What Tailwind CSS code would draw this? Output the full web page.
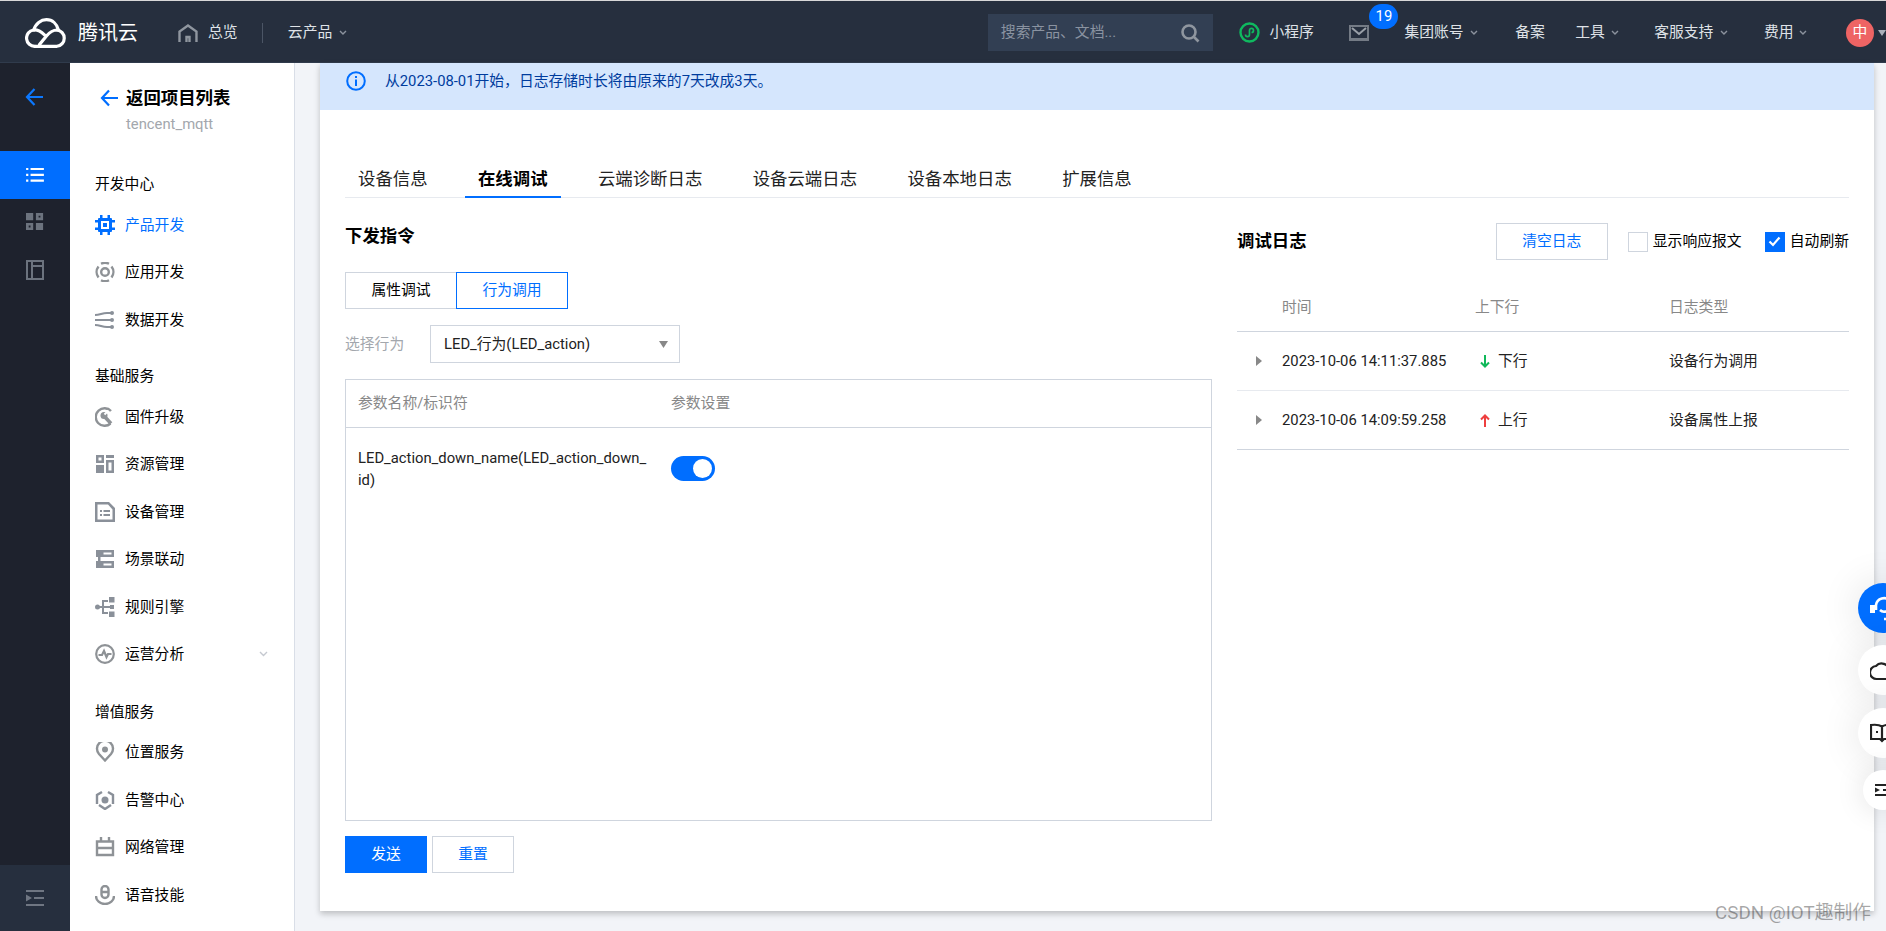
<!DOCTYPE html>
<html lang="zh">
<head>
  <meta charset="UTF-8" />
  <title>在线调试</title>
  <script src="https://cdn.jsdelivr.net/npm/@tailwindcss/browser@4"></script>
</head>
<body class="relative w-[1886px] h-[931px] overflow-hidden bg-[#f2f4f8] text-[14.8px] text-black font-[Roboto,'Noto_Sans_CJK_SC',sans-serif]">
  <div class="h-px bg-[#d8d8d8]"></div>

  <!-- top bar -->
  <header class="flex items-center h-[62px] pt-[2px] bg-[#262f3e] text-[#dfe2e7] border-b border-[#303b4c]">
    <svg class="ml-[25px] w-[42px] h-[30px]" viewBox="0 0 42 30" fill="none" stroke="#fff" stroke-width="3.2" stroke-linecap="round">
      <path d="M10 28.300H32A8.200 8.200 0 0 0 32 12C27 12 24.500 14.500 21.500 18L14.500 26.500"/>
      <path d="M10 28.300A8.200 8.200 0 0 1 8.500 12C13 11.500 16.500 14 19.500 16.800"/>
      <path d="M8.800 12C10.500 5.500 16 1.700 21.500 1.700C27.500 1.700 32 6 33.500 12"/>
    </svg>
    <span class="ml-[11px] w-[60px] text-[20px] text-white whitespace-nowrap">腾讯云</span>
    <svg class="ml-[40px] w-[20px] h-[18px]" viewBox="0 0 20 18" fill="none" stroke="#8f969f" stroke-width="2.400"><path d="M1.500 18V7.500L10 1.500l8.500 6V18M8.500 18v-5h3v5"/></svg>
    <span class="ml-[10px] w-[30px] whitespace-nowrap">总览</span>
    <span class="ml-[24px] w-px h-[20px] bg-[#4b5565]"></span>
    <span class="ml-[25px] w-[44px] whitespace-nowrap">云产品</span>
    <svg class="ml-[7px] w-[8px] h-[6px]" viewBox="0 0 8 6" fill="none" stroke="#8b929d" stroke-width="1.400"><path d="M1 1l3 3 3-3"/></svg>

    <div class="ml-[641px] flex items-center justify-between w-[225px] h-[37px] px-[13px] bg-[#323f53] text-[#8a93a1]">
      <span class="whitespace-nowrap">搜索产品、文档...</span>
      <svg class="w-[20px] h-[20px]" viewBox="0 0 20 20" fill="none" stroke="#8f969f" stroke-width="2.600"><circle cx="9" cy="9" r="6.500"/><path d="M14 14l4.500 4.500"/></svg>
    </div>
    <svg class="ml-[26px] w-[21px] h-[21px]" viewBox="0 0 21 21" fill="none"><circle cx="10.500" cy="10.500" r="9" stroke="#0fb95f" stroke-width="2.400"/><path d="M6.500 12.500c0 2.800 4 2.800 4 0V8.500c0-2.800 4-2.800 4 0 0 1.300-1 2-2 2" stroke="#0fb95f" stroke-width="1.700"/></svg>
    <span class="ml-[10px] w-[46px] whitespace-nowrap">小程序</span>
    <div class="relative ml-[34px] w-[20px] h-[16px] bg-[#262f3e] border-2 border-b-[3px] border-[#747b85]">
      <svg class="absolute left-0 top-0 w-[16px] h-[11px]" viewBox="0 0 16 11" fill="none" stroke="#9aa0a8" stroke-width="2"><path d="M1 1l7 6 7-6"/></svg>
      <span class="absolute left-[18px] top-[-23px] flex items-center justify-center w-[29px] h-[25px] rounded-full bg-[#006eff] text-white">19</span>
    </div>
    <span class="ml-[35px] w-[60px] whitespace-nowrap">集团账号</span>
    <svg class="ml-[6px] w-[8px] h-[6px]" viewBox="0 0 8 6" fill="none" stroke="#8b929d" stroke-width="1.400"><path d="M1 1l3 3 3-3"/></svg>
    <span class="ml-[37px] w-[30px] whitespace-nowrap">备案</span>
    <span class="ml-[30px] w-[30px] whitespace-nowrap">工具</span>
    <svg class="ml-[6px] w-[8px] h-[6px]" viewBox="0 0 8 6" fill="none" stroke="#8b929d" stroke-width="1.400"><path d="M1 1l3 3 3-3"/></svg>
    <span class="ml-[35px] w-[60px] whitespace-nowrap">客服支持</span>
    <svg class="ml-[6px] w-[8px] h-[6px]" viewBox="0 0 8 6" fill="none" stroke="#8b929d" stroke-width="1.400"><path d="M1 1l3 3 3-3"/></svg>
    <span class="ml-[36px] w-[30px] whitespace-nowrap">费用</span>
    <svg class="ml-[5px] w-[8px] h-[6px]" viewBox="0 0 8 6" fill="none" stroke="#8b929d" stroke-width="1.400"><path d="M1 1l3 3 3-3"/></svg>
    <span class="ml-[39px] flex items-center justify-center w-[28px] h-[28px] shrink-0 rounded-full bg-[#ee6464] text-white">中</span>
    <svg class="ml-[4px] w-[8px] h-[6px] shrink-0" viewBox="0 0 8 6" fill="#aab0ba"><path d="M0 0h8L4 6z"/></svg>
  </header>

  <div class="flex h-[868px]">
    <!-- icon rail -->
    <aside class="flex flex-col w-[70px] bg-[#1e222d]">
      <div class="flex items-center h-[88px] pl-[25px]">
        <svg class="w-[18px] h-[20px] mt-[-20px]" viewBox="0 0 18 20" fill="none" stroke="#0c78ff" stroke-width="2.200"><path d="M18 10H2M9.500 2 2 10l7.500 8"/></svg>
      </div>
      <div class="flex items-center justify-center h-[48px] bg-[#006eff]">
        <svg class="w-[18px] h-[16px]" viewBox="0 0 20 18" fill="#fff"><path d="M0 1h2.500v2.500H0zM5 1h15v2.500H5zM0 7.500h2.500V10H0zM5 7.500h15V10H5zM0 14h2.500v2.500H0zM5 14h15v2.500H5z"/></svg>
      </div>
      <div class="flex items-center justify-center h-[46px]">
        <svg class="w-[18px] h-[18px]" viewBox="0 0 20 20" fill="#6c737e"><path fill-rule="evenodd" d="M0 0h8v8H0zM11 0h8v8h-8zM14 3v2h2V3zM0 11h8v8H0zM3 14v2h2v-2zM11 11h8v8h-8z"/></svg>
      </div>
      <div class="flex items-center justify-center h-[49px]">
        <svg class="w-[18px] h-[20px]" viewBox="0 0 18 20" fill="none" stroke="#6c737e" stroke-width="2"><path d="M1 1h16v18H1zM6 1v18M6 6h11"/></svg>
      </div>
      <div class="mt-auto flex items-center justify-center h-[66px] bg-[#262f3e]">
        <svg class="w-[18px] h-[16px]" viewBox="0 0 18 16" fill="#6f7682"><path d="M0 0h18v2H0zM8 7h10v2H8zM0 14h18v2H0zM0 4.500 6 8l-6 3.500z"/></svg>
      </div>
    </aside>

    <!-- project menu -->
    <nav class="w-[225px] shrink-0 bg-white border-r border-[#d9dee7]">
      <div class="flex items-center gap-[8px] pl-[30px] pt-[24px]">
        <svg class="w-[18px] h-[18px]" viewBox="0 0 18 18" fill="none" stroke="#006eff" stroke-width="2.200"><path d="M18 9H2M9 1.500 2 9l7 7.500"/></svg>
        <span class="text-[17.400px] font-bold leading-[22px] whitespace-nowrap">返回项目列表</span>
      </div>
      <div class="pl-[56px] mt-[4px] leading-[22px] text-[#a3a7ad]">tencent_mqtt</div>

      <div class="flex items-center pl-[25px] h-[33px] mt-[33px]">开发中心</div>
      <a class="flex items-center h-[47.500px] pl-[25px] gap-[10px] text-[#006eff]">
        <svg class="w-[20px] h-[20px]" viewBox="0 0 20 20" fill="#006eff"><path fill-rule="evenodd" d="M4 3h12a1 1 0 0 1 1 1v12a1 1 0 0 1-1 1H4a1 1 0 0 1-1-1V4a1 1 0 0 1 1-1zM6 6v8h8V6z"/><path d="M8 8h4v4H8zM5 0h2.500v3H5zM12.500 0H15v3h-2.500zM5 17h2.500v3H5zM12.500 17H15v3h-2.500zM0 5h3v2.500H0zM0 12.500h3V15H0zM17 5h3v2.500h-3zM17 12.500h3V15h-3z"/></svg>
        产品开发
      </a>
      <a class="flex items-center h-[47.500px] pl-[25px] gap-[10px]">
        <svg class="w-[20px] h-[20px]" viewBox="0 0 20 20" fill="none" stroke="#8e9296" stroke-width="2.400"><circle cx="10" cy="10" r="3.800"/><path d="M3.500 4.500A9 9 0 0 0 3.500 15.500M16.500 4.500a9 9 0 0 1 0 11M6 1.800a9 9 0 0 1 8 0M6 18.200a9 9 0 0 0 8 0"/></svg>
        应用开发
      </a>
      <a class="flex items-center h-[47.500px] pl-[25px] gap-[10px]">
        <svg class="w-[20px] h-[20px]" viewBox="0 0 20 20" fill="none" stroke="#8a9099" stroke-width="2.200"><path d="M0 5c5 0 7-2 12-2h4M0 10h16M0 15c5 0 7 2 12 2h4"/><circle cx="17" cy="3" r="2" fill="#8a9099" stroke="none"/><circle cx="17" cy="10" r="2" fill="#8a9099" stroke="none"/><circle cx="17" cy="17" r="2" fill="#8a9099" stroke="none"/></svg>
        数据开发
      </a>

      <div class="flex items-center pl-[25px] h-[33px] mt-[16.500px]">基础服务</div>
      <a class="flex items-center h-[47.500px] pl-[25px] gap-[10px]">
        <svg class="w-[20px] h-[20px]" viewBox="0 0 20 20" fill="none" stroke="#8e9296" stroke-width="2.400"><path d="M16 4A8.800 8.800 0 1 0 15.500 16.500"/><path d="M9 9l7 7.500" stroke-width="3.600"/><circle cx="9" cy="8.500" r="3.500" fill="#8e9296" stroke="none"/><path d="M9.500 7.500l4-4" stroke="#fff" stroke-width="2"/></svg>
        固件升级
      </a>
      <a class="flex items-center h-[47.500px] pl-[25px] gap-[10px]">
        <svg class="w-[20px] h-[20px]" viewBox="0 0 20 20" fill="#8a9099"><path fill-rule="evenodd" d="M1 1h8v8H1zM3.500 3.500v3h3v-3zM11 1h8v3h-8zM11 6h8v13h-8zM13.500 8.500v8h3v-8zM1 11h8v8H1z"/></svg>
        资源管理
      </a>
      <a class="flex items-center h-[47.500px] pl-[25px] gap-[10px]">
        <svg class="w-[20px] h-[20px]" viewBox="0 0 20 20" fill="#8a9099"><path fill-rule="evenodd" d="M0 0h14l6 6v14H0zM2.500 2.500v15h15V7.500L13 2.500zM5 8h2v2H5zM8.500 8H15v2H8.500zM5 12h2v2H5zM8.500 12H15v2H8.500z"/></svg>
        设备管理
      </a>
      <a class="flex items-center h-[47.500px] pl-[25px] gap-[10px]">
        <svg class="w-[20px] h-[20px]" viewBox="0 0 20 20" fill="#8a9099"><path fill-rule="evenodd" d="M1 1h18v7H1zM8.500 3.500v2h8v-2zM1 12h18v7H1zM8.500 14.500v2h8v-2z"/><path d="M3 8h2.500v4H3z"/></svg>
        场景联动
      </a>
      <a class="flex items-center h-[47.500px] pl-[25px] gap-[10px]">
        <svg class="w-[20px] h-[20px]" viewBox="0 0 20 20" fill="#8a9099"><circle cx="2.500" cy="10" r="2.500"/><path d="M3 9h12v2H3zM7 3h2v14H7zM7 3h6v2H7zM7 15h6v2H7zM14 0h5.500v5.500H14zM14 14.500h5.500V20H14zM15 8h4v4h-4z"/></svg>
        规则引擎
      </a>
      <a class="flex items-center h-[47.500px] pl-[25px] gap-[10px]">
        <svg class="w-[20px] h-[20px]" viewBox="0 0 20 20" fill="none" stroke="#8e9296" stroke-width="2.200"><circle cx="10" cy="10" r="8.800"/><path d="M3.500 11H7l2-4 2.500 6 1.500-3h3.500"/></svg>
        运营分析
        <svg class="ml-auto mr-[26px] w-[9px] h-[6px]" viewBox="0 0 9 6" fill="none" stroke="#c5c9d0" stroke-width="1.400"><path d="M1 1l3.500 3.500L8 1"/></svg>
      </a>

      <div class="flex items-center pl-[25px] h-[33px] mt-[17.500px]">增值服务</div>
      <a class="flex items-center h-[47.500px] pl-[25px] gap-[10px]">
        <svg class="w-[20px] h-[20px]" viewBox="0 0 20 20" fill="none" stroke="#8e9296" stroke-width="2.400"><path d="M10 18.500 4 12a8 8 0 1 1 12 0z"/><circle cx="10" cy="7.500" r="1.800" fill="#8e9296"/></svg>
        位置服务
      </a>
      <a class="flex items-center h-[47.500px] pl-[25px] gap-[10px]">
        <svg class="w-[20px] h-[20px]" viewBox="0 0 20 20" fill="none" stroke="#8a9099" stroke-width="2.400"><path d="M7 2 2 5v9M13 2l5 3v9M4 15l6 4 6-4"/><circle cx="10" cy="10" r="3.500" fill="#8a9099" stroke="none"/></svg>
        告警中心
      </a>
      <a class="flex items-center h-[47.500px] pl-[25px] gap-[10px]">
        <svg class="w-[20px] h-[20px]" viewBox="0 0 20 20" fill="none" stroke="#8e9296" stroke-width="2.400"><path d="M2 4.500h16V18H2zM2 11h16M6 0v4.500M14 0v4.500"/></svg>
        网络管理
      </a>
      <a class="flex items-center h-[47.500px] pl-[25px] gap-[10px]">
        <svg class="w-[20px] h-[20px]" viewBox="0 0 20 20" fill="none" stroke="#8e9296" stroke-width="2.400"><rect x="6.500" y="1" width="7" height="12" rx="3.500"/><path d="M6.500 7h7M1 11c0 4.500 4 8 9 8s9-3.500 9-8"/></svg>
        语音技能
      </a>
    </nav>

    <!-- main card -->
    <main class="ml-[25px] w-[1554px] h-[848px] shrink-0 bg-white shadow-[0_3px_6px_rgba(0,0,0,0.22)]">
      <div class="flex items-start gap-[19px] h-[47px] pl-[26px] pt-[4px] bg-[#d5e6fd] text-[#003c9d]">
        <svg class="w-[20px] h-[20px] mt-[4px]" viewBox="0 0 20 20" fill="none"><circle cx="10" cy="10" r="8.800" stroke="#006eff" stroke-width="2"/><path d="M9 8.500h2V15H9zM9 5h2v2H9z" fill="#006eff"/></svg>
        <span class="leading-[28px]">从2023-08-01开始，日志存储时长将由原来的7天改成3天。</span>
      </div>

      <div class="px-[25px]">
        <div class="flex gap-[24.400px] mt-[50px] h-[38px] border-b border-[#e7eaef] text-[17.400px] leading-[38px]">
          <span class="px-[13px] h-[38px] text-[#222]">设备信息</span>
          <span class="px-[13px] h-[38px] font-bold border-b-2 border-[#006eff]">在线调试</span>
          <span class="px-[13px] h-[38px] text-[#222]">云端诊断日志</span>
          <span class="px-[13px] h-[38px] text-[#222]">设备云端日志</span>
          <span class="px-[13px] h-[38px] text-[#222]">设备本地日志</span>
          <span class="px-[13px] h-[38px] text-[#222]">扩展信息</span>
        </div>

        <div class="flex gap-[25px]">
          <!-- send command -->
          <section class="w-[867px]">
            <h2 class="mt-[26px] h-[24px] text-[17.400px] font-bold leading-[24px]">下发指令</h2>
            <div class="flex mt-[24px] h-[37px]">
              <button class="w-[111px] border border-[#cfd5de] border-r-0">属性调试</button>
              <button class="w-[112px] border border-[#006eff] text-[#006eff]">行为调用</button>
            </div>
            <div class="flex items-center mt-[16px] h-[38px]">
              <span class="w-[85px] text-[#a3a7ad]">选择行为</span>
              <div class="flex items-center justify-between w-[250px] h-[38px] pl-[13px] pr-[11px] border border-[#cfd5de] text-[#222]">
                <span>LED_行为(LED_action)</span>
                <svg class="w-[9px] h-[7px]" viewBox="0 0 9 7" fill="#888"><path d="M0 0h9L4.500 7z"/></svg>
              </div>
            </div>
            <div class="mt-[16px] h-[442px] border border-[#cfd5de]">
              <div class="flex items-center h-[48px] border-b border-[#cfd5de] text-[#888]">
                <span class="pl-[12px] w-[325px]">参数名称/标识符</span>
                <span>参数设置</span>
              </div>
              <div class="flex mt-[19px]">
                <div class="pl-[12px] pr-[23px] w-[325px] leading-[22px] break-all text-[#222]">LED_action_down_name(LED_action_down_id)</div>
                <div class="relative w-[44px] h-[25px] mt-[9px] rounded-full bg-[#006eff]">
                  <span class="absolute right-[3px] top-[3px] w-[19px] h-[19px] rounded-full bg-white"></span>
                </div>
              </div>
            </div>
            <div class="flex gap-[5px] mt-[15px]">
              <button class="w-[82px] h-[37px] bg-[#006eff] text-white">发送</button>
              <button class="w-[82px] h-[37px] border border-[#cfd5de] text-[#006eff]">重置</button>
            </div>
          </section>

          <!-- debug log -->
          <section class="w-[612px]">
            <div class="flex items-center mt-[25px] h-[37px]">
              <h2 class="text-[17.400px] font-bold">调试日志</h2>
              <button class="ml-auto w-[112px] h-[37px] border border-[#cfd5de] text-[#006eff]">清空日志</button>
              <span class="ml-[20px] w-[20px] h-[20px] border border-[#cfd5de]"></span>
              <span class="ml-[5px] w-[90px] whitespace-nowrap">显示响应报文</span>
              <span class="flex items-center justify-center ml-[22px] w-[20px] h-[20px] bg-[#006eff]">
                <svg class="w-[13px] h-[11px]" viewBox="0 0 13 11" fill="none" stroke="#fff" stroke-width="2.200"><path d="M1.500 5.500 5 9l6.500-7.500"/></svg>
              </span>
              <span class="ml-[5px] whitespace-nowrap">自动刷新</span>
            </div>
            <div class="grid grid-cols-[45px_193px_194px_1fr] items-center mt-[24px] h-[48px] border-b border-[#cfd5de] text-[#888]">
              <span></span><span>时间</span><span>上下行</span><span>日志类型</span>
            </div>
            <div class="grid grid-cols-[45px_193px_194px_1fr] items-center h-[59px] border-b border-[#e7eaef] text-[#222]">
              <svg class="ml-[19px] w-[6px] h-[10px]" viewBox="0 0 6 10" fill="#888"><path d="M0 0l6 5-6 5z"/></svg>
              <span>2023-10-06 14:11:37.885</span>
              <span class="flex items-center gap-[8px]">
                <svg class="ml-[5px] w-[10px] h-[13px]" viewBox="0 0 10 13" fill="none" stroke="#10b85a" stroke-width="2"><path d="M5 0v11.500M1 7.500l4 4 4-4"/></svg>
                下行
              </span>
              <span>设备行为调用</span>
            </div>
            <div class="grid grid-cols-[45px_193px_194px_1fr] items-center h-[59px] border-b border-[#cfd5de] text-[#222]">
              <svg class="ml-[19px] w-[6px] h-[10px]" viewBox="0 0 6 10" fill="#888"><path d="M0 0l6 5-6 5z"/></svg>
              <span>2023-10-06 14:09:59.258</span>
              <span class="flex items-center gap-[8px]">
                <svg class="ml-[5px] w-[10px] h-[13px]" viewBox="0 0 10 13" fill="none" stroke="#ee3f3f" stroke-width="2"><path d="M5 13V1.500M1 5.500l4-4 4 4"/></svg>
                上行
              </span>
              <span>设备属性上报</span>
            </div>
          </section>
        </div>
      </div>
    </main>
  </div>

  <!-- floating helpers -->
  <div class="absolute left-[1858px] top-[583px] flex items-center pl-[12px] w-[50px] h-[50px] rounded-full bg-[#006eff] shadow-[0_0_40px_rgba(0,0,0,0.12)]">
    <svg class="w-[22px] h-[26px] shrink-0" viewBox="0 0 22 26" fill="none" stroke="#fff" stroke-width="2.600"><path d="M6 15V10a8 8 0 0 1 14 -4"/><rect x="0" y="10" width="5" height="8" fill="#fff" stroke="none"/><path d="M10 15c3 3 8 2 9-2M14 24h6"/></svg>
  </div>
  <div class="absolute left-[1858px] top-[645px] flex items-center pl-[12px] w-[50px] h-[50px] rounded-full bg-white shadow-[0_0_40px_rgba(0,0,0,0.12)]">
    <svg class="w-[24px] h-[22px] shrink-0" viewBox="0 0 24 22" fill="none" stroke="#222" stroke-width="2.200"><path d="M7 20h12a4.500 4.500 0 0 0 0-9 7.500 7.500 0 0 0-13-4A6.500 6.500 0 0 0 7 20z"/></svg>
  </div>
  <div class="absolute left-[1858px] top-[708px] flex items-center pl-[12px] w-[50px] h-[50px] rounded-full bg-white shadow-[0_0_40px_rgba(0,0,0,0.12)]">
    <svg class="w-[24px] h-[20px] shrink-0" viewBox="0 0 24 20" fill="none" stroke="#222" stroke-width="2.200"><path d="M12 18V3.500C9 1.500 5 1.500 1 2v14h9l2 2 2-2h9V2c-4-.5-8-.5-11 1.500"/><path d="M6 8h2v2H6z" fill="#222" stroke="none"/></svg>
  </div>
  <div class="absolute left-[1863px] top-[770px] flex items-center pl-[12px] w-[40px] h-[40px] rounded-full bg-white shadow-[0_0_30px_rgba(0,0,0,0.12)]">
    <svg class="w-[16px] h-[16px] shrink-0" viewBox="0 0 16 16" fill="#222"><path d="M0 2h16v2H0zM8 7h8v2H8zM0 12h16v2H0zM0 5.500 5 8l-5 2.500z"/></svg>
  </div>

  <div class="absolute right-[15px] top-[902px] text-[18.800px] leading-[22px] text-black/35 whitespace-nowrap">CSDN @IOT趣制作</div>
</body>
</html>
